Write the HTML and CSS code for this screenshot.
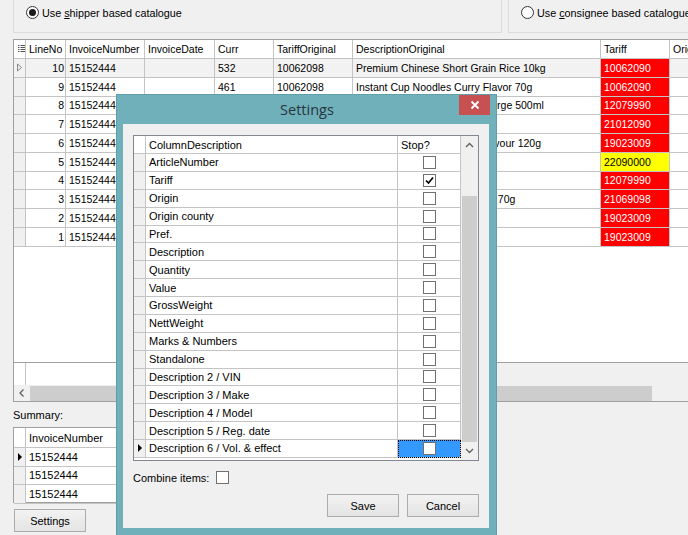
FILE: index.html
```
<!DOCTYPE html>
<html>
<head>
<meta charset="utf-8">
<link rel="stylesheet" href="styles.css">
</head>
<body>
<div class="app">
  <div class="groups">
    <div class="group left">
      <label class="radio"><span class="rb on"></span><span class="rt">Use <u>s</u>hipper based catalogue</span></label>
    </div>
    <div class="group right">
      <label class="radio"><span class="rb"></span><span class="rt">Use <u>c</u>onsignee based catalogue</span></label>
    </div>
  </div>

  <div class="grid main">
    <div class="mrow head">
      <div class="c rh"><svg width="7" height="8" viewBox="0 0 7 8"><path d="M0 0.5h1.5M2.5 0.5h4.5M0 2.5h1.5M2.5 2.5h4.5M0 4.5h1.5M2.5 4.5h4.5M0 6.5h1.5M2.5 6.5h4.5" stroke="#555" stroke-width="1"/></svg></div>
      <div class="c">LineNo</div><div class="c">InvoiceNumber</div><div class="c">InvoiceDate</div><div class="c">Curr</div><div class="c">TariffOriginal</div><div class="c">DescriptionOriginal</div><div class="c">Tariff</div><div class="c">Origin</div>
    </div>
    <div class="mrow cur">
      <div class="c rh"><svg width="7" height="9" viewBox="0 0 7 9"><path d="M1.5 1L5.5 4.5L1.5 8Z" fill="none" stroke="#888" stroke-width="1"/></svg></div>
      <div class="c num">10</div><div class="c">15152444</div><div class="c"></div><div class="c">532</div><div class="c">10062098</div><div class="c">Premium Chinese Short Grain Rice 10kg</div><div class="c red">10062090</div><div class="c"></div>
    </div>
    <div class="mrow">
      <div class="c rh"></div><div class="c num">9</div><div class="c">15152444</div><div class="c"></div><div class="c">461</div><div class="c">10062098</div><div class="c">Instant Cup Noodles Curry Flavor 70g</div><div class="c red">10062090</div><div class="c"></div>
    </div>
    <div class="mrow">
      <div class="c rh"></div><div class="c num">8</div><div class="c">15152444</div><div class="c"></div><div class="c">512</div><div class="c">12079990</div><div class="c">Roasted Sesame Oil Huile Vierge 500ml</div><div class="c red">12079990</div><div class="c"></div>
    </div>
    <div class="mrow">
      <div class="c rh"></div><div class="c num">7</div><div class="c">15152444</div><div class="c"></div><div class="c">512</div><div class="c">21012090</div><div class="c"></div><div class="c red">21012090</div><div class="c"></div>
    </div>
    <div class="mrow">
      <div class="c rh"></div><div class="c num">6</div><div class="c">15152444</div><div class="c"></div><div class="c">512</div><div class="c">19023009</div><div class="c">Instant Noodle Spicy Beef Flavour 120g</div><div class="c red">19023009</div><div class="c"></div>
    </div>
    <div class="mrow">
      <div class="c rh"></div><div class="c num">5</div><div class="c">15152444</div><div class="c"></div><div class="c">512</div><div class="c">22090000</div><div class="c"></div><div class="c yel">22090000</div><div class="c"></div>
    </div>
    <div class="mrow">
      <div class="c rh"></div><div class="c num">4</div><div class="c">15152444</div><div class="c"></div><div class="c">512</div><div class="c">12079990</div><div class="c"></div><div class="c red">12079990</div><div class="c"></div>
    </div>
    <div class="mrow">
      <div class="c rh"></div><div class="c num">3</div><div class="c">15152444</div><div class="c"></div><div class="c">512</div><div class="c">21069098</div><div class="c">Seaweed Snack Onion Flavor 70g</div><div class="c red">21069098</div><div class="c"></div>
    </div>
    <div class="mrow">
      <div class="c rh"></div><div class="c num">2</div><div class="c">15152444</div><div class="c"></div><div class="c">512</div><div class="c">19023009</div><div class="c"></div><div class="c red">19023009</div><div class="c"></div>
    </div>
    <div class="mrow">
      <div class="c rh"></div><div class="c num">1</div><div class="c">15152444</div><div class="c"></div><div class="c">512</div><div class="c">19023009</div><div class="c"></div><div class="c red">19023009</div><div class="c"></div>
    </div>
    <div class="fill"></div>
    <div class="mrow foot">
      <div class="c rh"></div><div class="c w"></div><div class="c w"></div><div class="c"></div><div class="c"></div><div class="c"></div><div class="c"></div><div class="c"></div><div class="c"></div>
    </div>
    <div class="hscroll">
      <span class="arr"><svg width="6" height="8" viewBox="0 0 6 8"><path d="M4.5 0.5L1 4L4.5 7.5" fill="none" stroke="#606060" stroke-width="1.3"/></svg></span>
      <span class="thumb"></span>
    </div>
  </div>

  <div class="summary-label">Summary:</div>
  <div class="grid summary">
    <div class="srow head"><div class="c rh"></div><div class="c">InvoiceNumber</div></div>
    <div class="srow"><div class="c rh"><span class="tri"></span></div><div class="c">15152444</div></div>
    <div class="srow"><div class="c rh"></div><div class="c">15152444</div></div>
    <div class="srow"><div class="c rh"></div><div class="c">15152444</div></div>
  </div>

  <button class="btn settings">Settings</button>

  <div class="dialog">
    <div class="titlebar">
      <span class="title">Settings</span>
      <span class="close"><svg width="10" height="10" viewBox="0 0 10 10"><path d="M1.5 1.5L8.5 8.5M8.5 1.5L1.5 8.5" stroke="#fff" stroke-width="1.8"/></svg></span>
    </div>
    <div class="client">
      <div class="grid dgrid">
        <div class="dtable">
          <div class="drow head"><div class="c rh"></div><div class="c">ColumnDescription</div><div class="c">Stop?</div></div>
          <div class="drow"><div class="c rh"></div><div class="c">ArticleNumber</div><div class="c ck"><span class="box"></span></div></div>
          <div class="drow"><div class="c rh"></div><div class="c">Tariff</div><div class="c ck"><span class="box"><svg width="11" height="11" viewBox="0 0 11 11"><path d="M2 5.5L4.5 8L9 2.5" fill="none" stroke="#000" stroke-width="1.7"/></svg></span></div></div>
          <div class="drow"><div class="c rh"></div><div class="c">Origin</div><div class="c ck"><span class="box"></span></div></div>
          <div class="drow"><div class="c rh"></div><div class="c">Origin county</div><div class="c ck"><span class="box"></span></div></div>
          <div class="drow"><div class="c rh"></div><div class="c">Pref.</div><div class="c ck"><span class="box"></span></div></div>
          <div class="drow"><div class="c rh"></div><div class="c">Description</div><div class="c ck"><span class="box"></span></div></div>
          <div class="drow"><div class="c rh"></div><div class="c">Quantity</div><div class="c ck"><span class="box"></span></div></div>
          <div class="drow"><div class="c rh"></div><div class="c">Value</div><div class="c ck"><span class="box"></span></div></div>
          <div class="drow"><div class="c rh"></div><div class="c">GrossWeight</div><div class="c ck"><span class="box"></span></div></div>
          <div class="drow"><div class="c rh"></div><div class="c">NettWeight</div><div class="c ck"><span class="box"></span></div></div>
          <div class="drow"><div class="c rh"></div><div class="c">Marks &amp; Numbers</div><div class="c ck"><span class="box"></span></div></div>
          <div class="drow"><div class="c rh"></div><div class="c">Standalone</div><div class="c ck"><span class="box"></span></div></div>
          <div class="drow"><div class="c rh"></div><div class="c">Description 2 / VIN</div><div class="c ck"><span class="box"></span></div></div>
          <div class="drow"><div class="c rh"></div><div class="c">Description 3 / Make</div><div class="c ck"><span class="box"></span></div></div>
          <div class="drow"><div class="c rh"></div><div class="c">Description 4 / Model</div><div class="c ck"><span class="box"></span></div></div>
          <div class="drow"><div class="c rh"></div><div class="c">Description 5 / Reg. date</div><div class="c ck"><span class="box"></span></div></div>
          <div class="drow"><div class="c rh"><span class="tri"></span></div><div class="c">Description 6 / Vol. &amp; effect</div><div class="c ck sel"><span class="box"></span></div></div>
        </div>
        <div class="vscroll">
          <span class="varr"><svg width="9" height="6" viewBox="0 0 9 6"><path d="M1 5L4.5 1.5L8 5" fill="none" stroke="#606060" stroke-width="1.3"/></svg></span>
          <span class="vtrack"><span class="vthumb"></span></span>
          <span class="varr"><svg width="9" height="6" viewBox="0 0 9 6"><path d="M1 1L4.5 4.5L8 1" fill="none" stroke="#606060" stroke-width="1.3"/></svg></span>
        </div>
      </div>
      <div class="combine"><span>Combine items:</span><span class="box"></span></div>
      <div class="actions">
        <button class="btn">Save</button>
        <button class="btn">Cancel</button>
      </div>
    </div>
  </div>
</div>
</body>
</html>
```

FILE: styles.css
```
* { box-sizing: border-box; }
html, body { margin: 0; padding: 0; }
body {
  width: 688px;
  height: 535px;
  overflow: hidden;
  background: #f0f0f0;
  font-family: "Liberation Sans", Arial, sans-serif;
  font-size: 11px;
  color: #000;
}
.app { position: relative; width: 688px; height: 535px; }

/* group boxes */
.groups { display: flex; gap: 6px; height: 33px; padding-left: 13px; }
.group { border: 1px solid #dcdcdc; border-top: none; height: 33px; }
.group.left { width: 489px; padding: 6px 0 0 12px; }
.group.right { flex: 1; margin-right: -20px; padding: 6px 0 0 12px; }
.radio { display: flex; align-items: center; gap: 3px; height: 13px; white-space: nowrap; }
.rt { font-size: 10.8px; }
.radio u { text-decoration: underline; }
.rb { width: 13px; height: 13px; border: 1px solid #333; border-radius: 50%; background: #fff; display: flex; align-items: center; justify-content: center; }
.rb.on::after { content: ""; width: 7px; height: 7px; border-radius: 50%; background: #1a1a1a; }

/* grids */
.grid { background: #fff; border: 1px solid #a0a0a0; }
.c { border-right: 1px solid #c4c4c4; border-bottom: 1px solid #c4c4c4; padding: 0 3px; white-space: nowrap; overflow: hidden; display: flex; align-items: center; }
.c.rh { background: #f0f0f0; padding: 0; justify-content: center; }

.main { margin: 6px 0 0 13px; width: 700px; height: 363px; display: flex; flex-direction: column; font-size: 10.5px; }
.mrow { display: grid; grid-template-columns: 12px 40px 79px 70px 59px 79px 248px 69px 100px; height: 18.75px; flex: none; }
.mrow.head { height: 19px; }
.mrow.head .c { background: #fff; padding-left: 3px; }
.mrow.head .c.rh { background: #fff; }
.mrow.cur .c { background: #f2f2f2; }
.mrow .c.num { justify-content: flex-end; padding-right: 1px; }
.mrow .c.red { background: #ff0000; color: #fff; }
.mrow .c.yel { background: #ffff00; color: #000; }
.fill { flex: 1; }
.mrow.foot { height: 23px; border-top: 1px solid #a0a0a0; }
.mrow.foot .c { background: #f0f0f0; border-bottom: none; border-right-color: #f0f0f0; }
.mrow.foot .c.rh { background: #fff; border-right-color: #c4c4c4; }
.mrow.foot .c.w { background: #fff; border-right-color: #fff; }
.hscroll { height: 16px; flex: none; background: #f0f0f0; display: flex; align-items: center; }
.hscroll .arr { width: 16px; display: flex; justify-content: center; }
.hscroll .thumb { width: 622px; height: 15px; background: #cdcdcd; margin-left: 0; }

.summary-label { margin: 7px 0 0 13px; height: 13px; line-height: 13px; }
.summary { margin: 5px 0 0 13px; width: 240px; height: 76px; }
.srow { display: grid; grid-template-columns: 12px 1fr; height: 18.5px; }
.srow.head { height: 20px; }
.srow.head .c.rh { background: #fff; }
.tri { width: 0; height: 0; border-top: 4px solid transparent; border-bottom: 4px solid transparent; border-left: 4px solid #000; }

.btn { font-family: "Liberation Sans", Arial, sans-serif; font-size: 11px; color: #000; background: linear-gradient(#f2f2f2, #e4e4e4); border: 1px solid #acacac; padding: 0; width: 72px; height: 23px; }
.settings { display: block; margin: 6px 0 0 14px; }

/* dialog */
.dialog { position: absolute; left: 116px; top: 94px; width: 381px; height: 450px; background: #6fb0ba; border: 1px solid #5f9fa9; padding: 0 7px 7px 6px; }
.titlebar { height: 29px; display: flex; align-items: center; justify-content: center; position: relative; }
.title { font-family: "Open Sans", "Noto Sans", sans-serif; font-size: 14.5px; color: #27363d; margin-left: 2px; margin-top: -1px; }
.close { position: absolute; right: -1px; top: 0; width: 31px; height: 20px; background: #c75050; display: flex; align-items: center; justify-content: center; }
.client { background: #f0f0f0; height: 404px; padding: 11px 10px 0 10px; }
.dgrid { width: 346px; height: 326px; display: flex; border-color: #828790; }
.dtable { width: 327px; }
.drow { display: grid; grid-template-columns: 12px 252px 63px; height: 17.88px; }
.drow.head { height: 18px; }
.drow.head .c { background: #fff; }
.drow .c.ck { justify-content: center; padding: 0; }
.drow .c.sel { background: #3399ff; outline: 1px dotted #000; outline-offset: -1px; }
.box { width: 13px; height: 13px; border: 1px solid #707070; background: #fff; display: flex; align-items: center; justify-content: center; flex: none; }
.vscroll { width: 17px; background: #f0f0f0; display: flex; flex-direction: column; }
.varr { height: 18px; display: flex; align-items: center; justify-content: center; flex: none; }
.vtrack { flex: 1; display: flex; flex-direction: column; padding: 42px 1px 0 1px; }
.vthumb { flex: 1; background: #cdcdcd; }
.combine { display: flex; align-items: center; gap: 7px; margin-top: 10px; height: 13px; }
.actions { display: flex; justify-content: flex-end; gap: 8px; margin-top: 10px; }
```
